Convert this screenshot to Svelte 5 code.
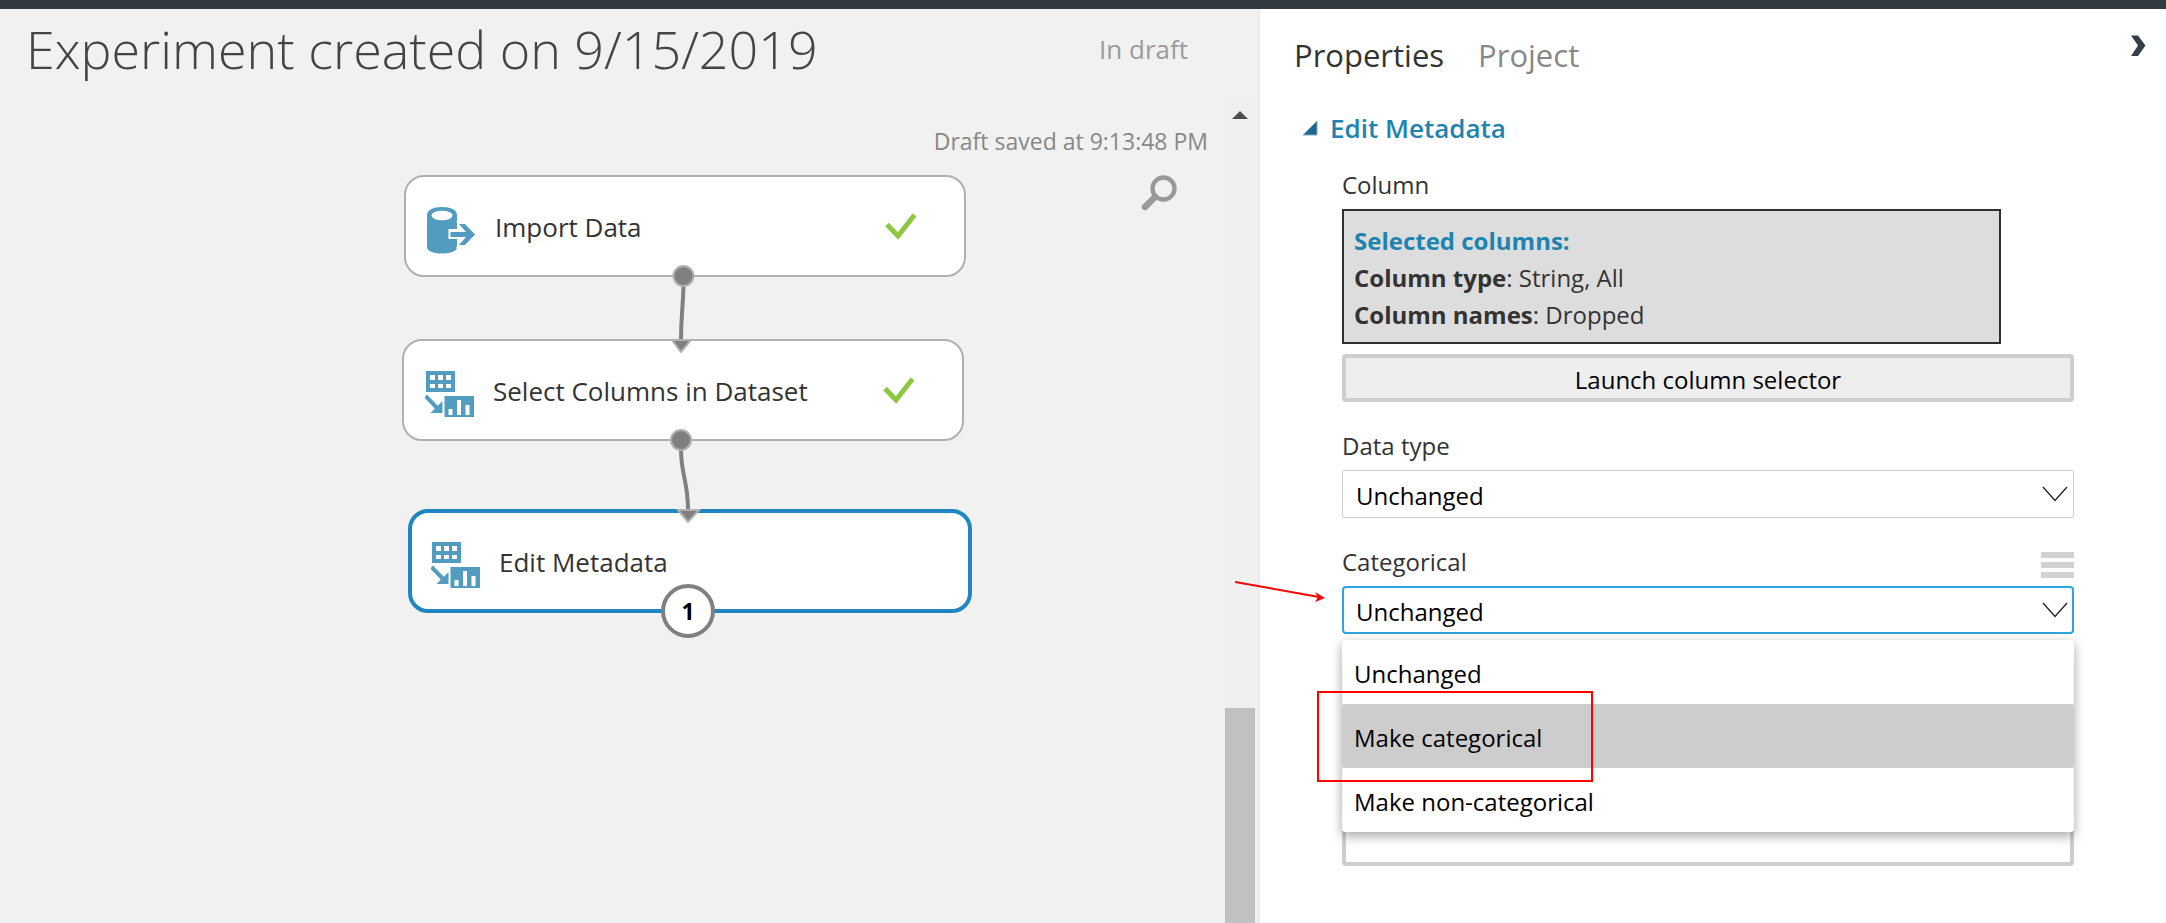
<script>
  const nodes = [
    { name: 'Import Data', icon: 'import', x: 404, y: 78, done: true },
    { name: 'Select Columns in Dataset', icon: 'transform', x: 402, y: 242, done: true },
    { name: 'Edit Metadata', icon: 'transform', x: 408, y: 412, selected: true }
  ];
  const options = ['Unchanged', 'Make categorical', 'Make non-categorical'];
  let dataType = $state('Unchanged');
  let categorical = $state('Unchanged');
  let newNames = $state('');
</script>

{#snippet chevron()}
  <svg class="chevron" width="26" height="16" viewBox="0 0 26 16" aria-hidden="true">
    <path d="M1 1 L13 14.500 L25 1" fill="none" stroke="#222" stroke-width="1.300" />
  </svg>
{/snippet}

<div class="app">
  <div class="topbar"></div>
  <main class="workspace">
    <header class="heading">
      <h1>Experiment created on 9/15/2019</h1>
      <span class="state">In draft</span>
    </header>

    <div class="stage">
      <section class="canvas" aria-label="Experiment canvas">
        <p class="saved">Draft saved at 9:13:48 PM</p>
        <button class="zoom" aria-label="Zoom">
          <svg width="36" height="36" viewBox="0 0 36 36">
            <circle cx="22.500" cy="13.500" r="11" fill="none" stroke="#999" stroke-width="4.400" />
            <path d="M14 22 L4 32" stroke="#999" stroke-width="6.500" stroke-linecap="round" />
          </svg>
        </button>

        {#each nodes as node}
          <div class="node" class:selected={node.selected} style="left:{node.x}px;top:{node.y}px">
            {#if node.icon === 'import'}
              <svg class="icon" width="50" height="48" viewBox="0 0 50 48" aria-hidden="true">
                <path d="M0 8 C0 3 6 0 15 0 S30 3 30 8 V40 C30 44 24 46.500 15 46.500 S0 44 0 40 Z" fill="#519cbf" />
                <ellipse cx="15" cy="8.500" rx="10.500" ry="4.800" fill="#fff" />
                <path d="M21.500 22 H34 L29 14 H39 L49 27.500 L39 41 H29 L34 32 H21.500 Z" fill="#fff" />
                <path d="M23.500 25 H39 L32 17 H38 L48 27.500 L38 38 H32 L39 30 H23.500 Z" fill="#519cbf" />
              </svg>
            {:else}
              <svg class="icon" width="50" height="48" viewBox="2 0 50 48" aria-hidden="true">
                <path d="M3 0 H32 V21 H3 Z" fill="#519cbf" />
                <path d="M7 4 h5 v5 h-5z M15 4 h5 v5 h-5z M23 4 h5 v5 h-5z M7 13 h5 v4 h-5z M15 13 h5 v4 h-5z M23 13 h5 v4 h-5z" fill="#fff" />
                <path d="M2.500 25 L15 38" stroke="#519cbf" stroke-width="4" />
                <path d="M19.500 30 V42 H7.500 Z" fill="#519cbf" />
                <path d="M21.500 25 H51 V46 H21.500 Z" fill="#519cbf" />
                <path d="M25.500 38 h4 v6 h-4z M34 29 h4 v15 h-4z M42.500 34 h4 v10 h-4z" fill="#fff" />
              </svg>
            {/if}
            <span class="name">{node.name}</span>
            {#if node.done}
              <svg class="tick" width="32" height="27" viewBox="0 0 32 27" aria-label="Finished">
                <path d="M2 11.500 L13 23 L29.500 2" fill="none" stroke="#8dc63f" stroke-width="5" />
              </svg>
            {/if}
          </div>
        {/each}

        <svg class="wires" width="1200" height="600" viewBox="0 0 1200 600" aria-hidden="true">
          <g fill="none" stroke="#808080" stroke-width="4">
            <path d="M683.500 188 C683 212 681 218 681 243" />
            <path d="M681 352 C681 378 688 384 688 412" />
          </g>
          <g fill="#808080" stroke="#b0b0b0" stroke-width="2">
            <path d="M672 243 H691 L681 255 Z" />
            <path d="M678 413 H699 L688 425 Z" />
            <circle cx="683.500" cy="179" r="10" />
            <circle cx="681" cy="343" r="10" />
          </g>
        </svg>
        <span class="port">1</span>
      </section>

      <div class="scrollbar">
        <svg width="16" height="8" viewBox="0 0 16 8" aria-hidden="true"><path d="M0 8 L8 0 L16 8 Z" fill="#4d4d4d" /></svg>
        <div class="thumb"></div>
      </div>
    </div>
  </main>

  <aside class="panel">
    <nav class="tabs">
      <button class="tab active">Properties</button>
      <button class="tab">Project</button>
      <button class="collapse" aria-label="Collapse panel">
        <svg width="16" height="22" viewBox="0 0 16 22"><path d="M1 0.500 H8 L15.500 10.500 L8 21 H1 L8 10.500 Z" fill="#333f48" /></svg>
      </button>
    </nav>

    <h2>
      <svg width="16" height="16" viewBox="0 0 16 16" aria-hidden="true"><path d="M15 1 V15 H1 Z" fill="#1c678d" stroke="#84a9bd" stroke-width="1" /></svg>
      Edit Metadata
    </h2>

    <div class="fields">
      <div class="field">
        <span class="label">Column</span>
        <div class="summary">
          <strong class="lead">Selected columns:</strong>
          <span><strong>Column type</strong>: String, All</span>
          <span><strong>Column names</strong>: Dropped</span>
        </div>
        <button class="launch">Launch column selector</button>
      </div>

      <div class="field">
        <label class="label" for="datatype">Data type</label>
        <div class="select">
          <select id="datatype" bind:value={dataType}>
            <option>Unchanged</option>
            <option>String</option>
            <option>Integer</option>
          </select>
          {@render chevron()}
        </div>
      </div>

      <div class="field">
        <div class="row">
          <label class="label" for="categorical">Categorical</label>
          <button class="more" aria-label="Parameter options"><i></i><i></i><i></i></button>
        </div>
        <div class="select focused">
          <select id="categorical" bind:value={categorical}>
            {#each options as option}<option>{option}</option>{/each}
          </select>
          {@render chevron()}
          <div class="menu">
            {#each options as option, i}
              <button class="option" class:hover={i === 1} onclick={() => (categorical = option)}>{option}</button>
            {/each}
            <div class="mark"></div>
          </div>
          <svg class="arrow" width="92" height="24" viewBox="0 0 92 24" aria-hidden="true">
            <path d="M0 4 L84 19" stroke="#f00" stroke-width="2" />
            <path d="M80 14 L90 20 L80 24 L83 19 Z" fill="#f00" />
          </svg>
        </div>
      </div>

      <input class="names" aria-label="New column names" bind:value={newNames} />
    </div>
  </aside>
</div>

<style>
  :global(body) { margin: 0; background: #fff; }
  .app {
    display: grid;
    grid-template-columns: minmax(0, 1fr) 906px;
    grid-template-rows: 9px 1fr;
    min-height: 100vh;
    font-family: "Open Sans", "Noto Sans", sans-serif;
    font-size: 24px;
    color: #333;
  }
  .app * { box-sizing: border-box; }
  .topbar { grid-column: 1 / -1; background: #333a42; }
  button { font: inherit; color: inherit; border: 0; background: none; padding: 0; margin: 0; cursor: pointer; }
  svg { display: block; flex: none; }

  .workspace { display: flex; flex-direction: column; background: #f1f1f1; border-right: 2px solid #ebebeb; }
  .heading { display: flex; align-items: center; justify-content: space-between; height: 88px; padding: 0 70px 8px 26px; }
  h1 { margin: 0; font-size: 52px; line-height: 72px; font-weight: 300; color: #444; white-space: nowrap; }
  .state { font-size: 26px; color: #9b9b9b; }
  .stage { flex: 1; display: flex; }
  .canvas { position: relative; flex: 1; min-width: 0; }
  .saved { margin: 28px 16px 0 0; font-size: 23px; line-height: 32px; text-align: right; color: #888; }
  .zoom { display: block; margin: 18px 47px 0 auto; }

  .node {
    position: absolute; display: flex; align-items: center; width: 562px; height: 102px;
    padding: 0 47px 0 21px; background: #fff; border: 2px solid #b0b0b0; border-radius: 20px;
  }
  .node.selected { width: 564px; height: 104px; padding: 0 47px 0 19px; border: 4px solid #1f86c1; }
  .icon { margin-top: 9px; }
  .name { flex: 1; margin-left: 18px; padding-top: 2px; font-size: 26px; line-height: 36px; }
  .wires { position: absolute; left: 0; top: 0; pointer-events: none; }
  .port {
    position: absolute; left: 661px; top: 487px; width: 54px; height: 54px; border: 4px solid #808080;
    border-radius: 50%; background: #fff; color: #000; font-weight: 700; font-size: 23px; line-height: 46px; text-align: center;
  }
  .scrollbar { display: flex; flex-direction: column; align-items: center; width: 34px; padding: 14px 2px 0 0; background: #f0f0f0; }
  .thumb { flex: 1; width: 30px; margin-top: 589px; background: #c1c1c1; }

  .panel { background: #fff; padding: 24px 20px 40px 34px; }
  .tabs { display: flex; gap: 34px; height: 44px; font-size: 31px; line-height: 44px; }
  .tab { color: #888; }
  .tab.active { color: #333; }
  .collapse { margin-left: auto; align-self: flex-start; padding-top: 2px; }
  h2 { display: flex; align-items: center; gap: 12px; margin: 31px 0 19px; padding-left: 8px; font-size: 26px; line-height: 40px; font-weight: 600; color: #1f83b0; }
  .fields { display: flex; flex-direction: column; gap: 26px; width: 732px; margin-left: 48px; }
  .label { display: block; line-height: 36px; margin-bottom: 6px; }
  .summary { display: flex; flex-direction: column; width: 90%; padding: 11px 10px 9px; line-height: 37px; background: #ddd; border: 2px solid #2f2f2f; }
  .lead { color: #1f83b0; }
  .launch { display: block; width: 100%; height: 48px; margin-top: 10px; padding-top: 4px; color: #000; background: #eee; border: 4px solid #cdcdcd; border-radius: 4px; line-height: 36px; }
  .row { display: flex; justify-content: space-between; }
  .more { display: flex; flex-direction: column; gap: 4px; width: 33px; padding-top: 8px; }
  .more i { height: 6px; background: #d2d2d2; }
  .select { position: relative; }
  select, .names { display: block; width: 100%; height: 48px; font: inherit; color: #000; background: #fff; border: 1px solid #cdcdcd; border-radius: 2px; }
  select { appearance: none; padding: 2px 50px 0 13px; }
  .focused select { padding: 2px 50px 0 12px; border: 2px solid #2ba5dd; border-radius: 4px; }
  .chevron { position: absolute; right: 6px; top: 16px; pointer-events: none; }
  .menu { position: absolute; z-index: 2; left: 0; right: 0; top: 54px; background: #fff; border-radius: 3px; box-shadow: 0 4px 12px rgba(0, 0, 0, 0.36); }
  .option { display: block; width: 100%; height: 64px; padding: 2px 12px 0; color: #000; text-align: left; border-radius: 2px; }
  .option.hover { background: #cdcdcd; }
  .mark { position: absolute; left: -25px; top: 51px; width: 276px; height: 91px; border: 2px solid #f00; pointer-events: none; }
  .arrow { position: absolute; left: -107px; top: -8px; }
  .names { margin-top: 158px; border: 4px solid #cdcdcd; border-radius: 4px; }
</style>
